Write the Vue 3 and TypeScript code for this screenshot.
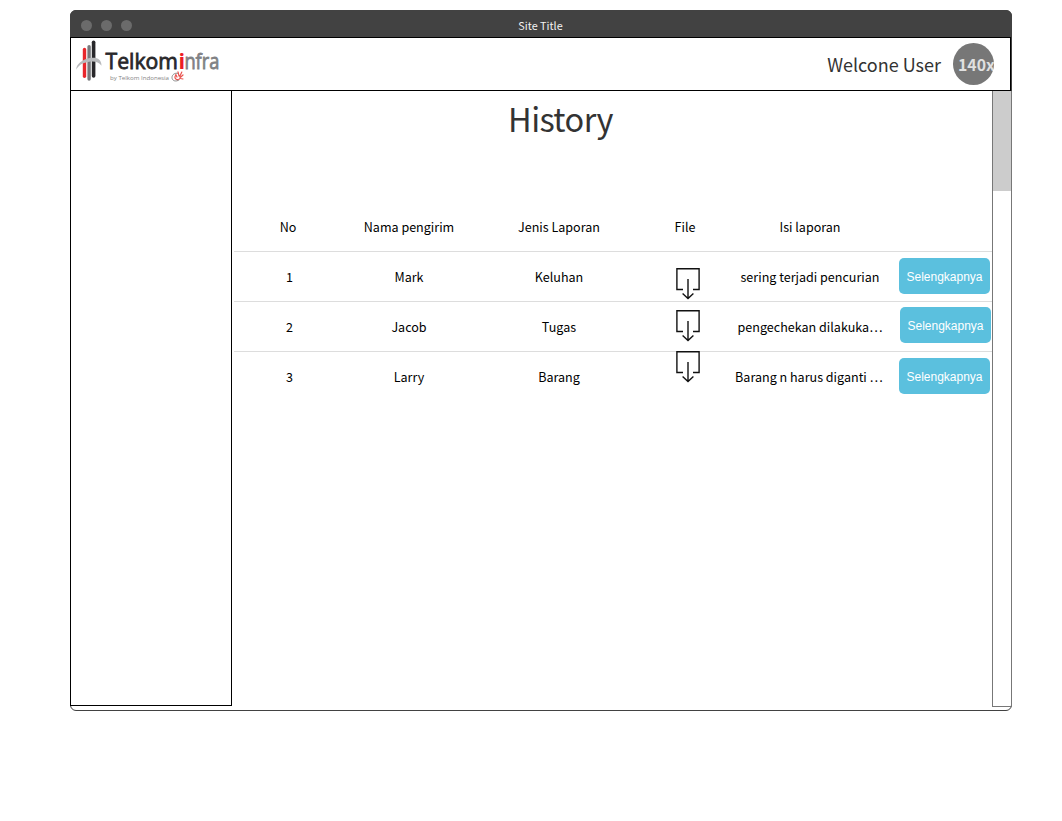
<script setup lang="ts">
interface Report {
  no: number
  sender: string
  kind: string
  content: string
}

const headings: string[] = ['No', 'Nama pengirim', 'Jenis Laporan', 'File', 'Isi laporan']

const reports: Report[] = [
  { no: 1, sender: 'Mark', kind: 'Keluhan', content: 'sering terjadi pencurian' },
  { no: 2, sender: 'Jacob', kind: 'Tugas', content: 'pengechekan dilakuka…' },
  { no: 3, sender: 'Larry', kind: 'Barang', content: 'Barang n harus diganti …' },
]
</script>

<template>
  <div class="window">
    <div class="titlebar">
      <div class="dots"><i></i><i></i><i></i></div>
      <span class="site-title">Site Title</span>
    </div>
    <header class="header">
      <svg class="logo" width="156" height="50" viewBox="0 0 156 50">
        <g fill="none" stroke-linecap="round">
          <path d="M13.5 10.5V37.3" stroke="#e8262b" stroke-width="3.4" />
          <path d="M18.1 7.8V40" stroke="#77787b" stroke-width="3.4" />
          <path d="M22.6 3.2V37" stroke="#28272a" stroke-width="3.6" />
        </g>
        <path d="M5.4 30.8C4.6 25 12 20 19 18.9C26 17.9 30.5 20 30.5 26.7C27.5 22.6 23 21.8 17 22.9C11.5 23.8 7 26.3 5.4 30.8Z" fill="#b9babc" />
        <g class="wordmark">
          <text x="34.5" y="29.6" textLength="72.4" lengthAdjust="spacingAndGlyphs" fill="#28272a" stroke="#28272a">Telkom</text>
          <text class="bold" x="107.4" y="29.6" textLength="6.6" lengthAdjust="spacingAndGlyphs" fill="#ed1c24">i</text>
          <text x="113.4" y="29.6" textLength="35" lengthAdjust="spacingAndGlyphs" fill="#808184" stroke="#808184">nfra</text>
        </g>
        <text class="tagline" x="39" y="41.4" textLength="59" lengthAdjust="spacingAndGlyphs">by Telkom Indonesia</text>
        <g fill="none" stroke-linecap="round">
          <path d="M107 34.3C103.5 33.5 101 36 101 38.5C101 42 105 43 108 41" stroke="#8a8a8a" stroke-width="1" />
          <path d="M104.5 36.5C103 38.5 104.5 41 107 40.5C109 40.2 110 38.5 108.6 37M106 38L104.8 35.5M108 37L107 32.8M109 37L110.8 33M109.5 38.2L112 36M109.5 39.5L112 40" stroke="#e9534f" stroke-width="1.2" />
        </g>
      </svg>
      <div class="user">
        <span class="welcome">Welcone User</span>
        <div class="avatar"><span>140x</span></div>
      </div>
    </header>
    <div class="body">
      <aside class="sidebar"></aside>
      <main class="content">
        <h1>History</h1>
        <div class="table">
          <div class="row head">
            <span v-for="heading in headings" :key="heading" class="cell">{{ heading }}</span>
          </div>
          <div v-for="report in reports" :key="report.no" class="row">
            <span class="cell number">{{ report.no }}</span>
            <span class="cell">{{ report.sender }}</span>
            <span class="cell">{{ report.kind }}</span>
            <svg class="download" width="24" height="32" viewBox="0 0 24 32" fill="none" stroke="#111">
              <path d="M7 21.5H.9V.7H23.1V21.5H17" stroke-width="1.4" />
              <path d="M12 11V30.5M6.6 25.6L12 30.6L17.4 25.6" stroke-width="1.4" />
            </svg>
            <span class="cell">{{ report.content }}</span>
            <button class="more" type="button">Selengkapnya</button>
          </div>
        </div>
      </main>
      <div class="scrollbar"><div class="thumb"></div></div>
    </div>
  </div>
</template>

<style>
body {
  background: #fff;
}
</style>

<style scoped>
* {
  box-sizing: border-box;
}
.window {
  width: 942px;
  height: 701px;
  margin: 10px 0 0 70px;
  display: flex;
  flex-direction: column;
  border: 1px solid #424242;
  border-radius: 6px;
  font-family: "Noto Sans CJK JP", sans-serif;
  color: #000;
}
.titlebar {
  flex: none;
  height: 27px;
  margin: -1px -1px 0;
  display: grid;
  grid-template-columns: 1fr auto 1fr;
  align-items: center;
  background: #424242;
  border-radius: 6px 6px 0 0;
}
.dots {
  display: flex;
  gap: 9px;
  padding: 3px 0 0 11px;
}
.dots i {
  width: 11px;
  height: 11px;
  border-radius: 50%;
  background: #6b6b6b;
}
.site-title {
  font-size: 10.8px;
  line-height: 16px;
  padding: 2px 1px 0 0;
  color: #f2f2f2;
}
.header {
  flex: none;
  height: 54px;
  margin: 0 0 0 -1px;
  display: flex;
  justify-content: space-between;
  border: 1px solid #000;
}
.logo {
  margin-top: 1px;
}
.wordmark {
  font-family: "Open Sans", sans-serif;
  font-size: 22px;
  font-weight: 400;
  stroke-width: 0.8px;
}
.bold {
  font-weight: 700;
}
.tagline {
  font-family: "Open Sans", sans-serif;
  font-size: 6px;
  fill: #858585;
}
.user {
  display: flex;
  gap: 12px;
  padding: 5px 16px 0 0;
}
.welcome {
  font-size: 18px;
  line-height: 43px;
  color: #333;
}
.avatar {
  width: 41px;
  height: 42px;
  padding-left: 5px;
  border-radius: 50%;
  overflow: hidden;
  background: #777;
  color: #e0e0e0;
  font-size: 15.8px;
  font-weight: 700;
  line-height: 43px;
  white-space: nowrap;
}
.body {
  flex: 1;
  display: flex;
  min-height: 0;
}
.sidebar {
  flex: none;
  width: 162px;
  height: 616px;
  margin: -1px 0 0 -1px;
  border: 1px solid #000;
}
.content {
  flex: 1;
  min-width: 0;
  padding-left: 2px;
}
h1 {
  height: 113px;
  margin: 0;
  padding-right: 105px;
  text-align: center;
  font-size: 32.5px;
  font-weight: 400;
  letter-spacing: -0.6px;
  line-height: 54px;
  color: #333;
}
.row {
  display: grid;
  grid-template-columns: 110px 130px 170px 82px 168px 98px;
  height: 50px;
  border-top: 1px solid #ddd;
  font-size: 12.55px;
  line-height: 50px;
  text-align: center;
}
.head {
  height: 47px;
  border-top: 0;
  line-height: 46px;
}
.head .cell:first-child {
  padding-right: 2px;
}
.cell {
  white-space: nowrap;
}
.number {
  padding-left: 1px;
}
.download {
  margin: 16px 0 0 32px;
}
.row:nth-child(3) .download {
  margin-top: 8px;
}
.row:nth-child(4) .download {
  margin-top: -1px;
}
.row:nth-child(4) .cell:nth-child(5) {
  padding-right: 2px;
}
.more {
  width: 91px;
  height: 36px;
  margin: 6px 0 0 5px;
  padding: 2px 0 0;
  border: 0;
  border-radius: 5px;
  background: #5bc0de;
  color: #fff;
  font: 12px/34px "Liberation Sans", sans-serif;
}
.row:nth-child(3) .more {
  margin: 5px 0 0 6px;
}
.scrollbar {
  flex: none;
  width: 20px;
  height: 616px;
  margin-right: -1px;
  border: 1px solid #777;
  border-top: 0;
}
.thumb {
  height: 100px;
  background: #ccc;
}
</style>
